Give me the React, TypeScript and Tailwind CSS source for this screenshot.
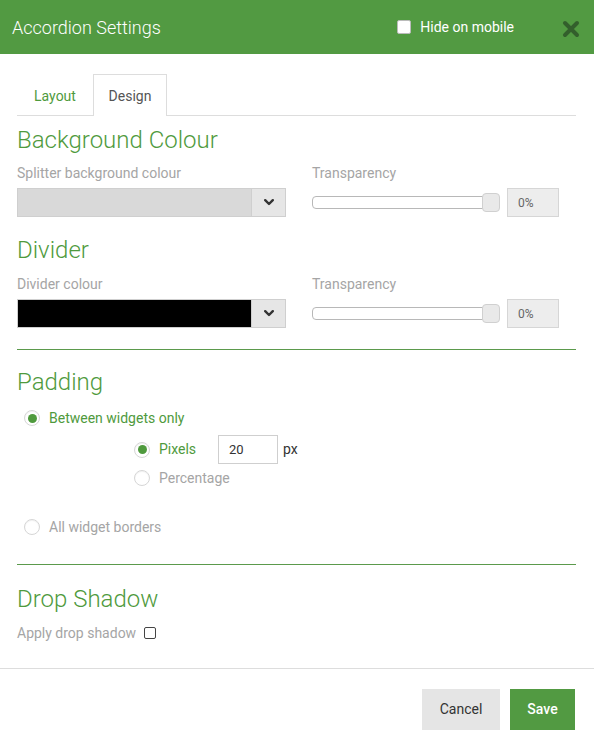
import React from "react";

function Radio({ checked }: { checked?: boolean }) {
  return (
    <span className="inline-flex h-[16px] w-[16px] items-center justify-center rounded-full border border-[#d6d6d6] bg-white shadow-[inset_0_1px_1px_rgba(0,0,0,0.06)]">
      {checked && <span className="h-[9px] w-[9px] rounded-full bg-[#4f9a3d]" />}
    </span>
  );
}

function ColourRow({ swatch }: { swatch: string }) {
  return (
    <div className="mt-[5px] flex items-start">
      <div className="flex h-[29px] w-[269px] border border-[#cfcfcf]">
        <div className="flex-1" style={{ background: swatch }} />
        <div className="flex w-[34px] items-center justify-center border-l border-[#cfcfcf] bg-[#e6e6e6]">
          <svg width="10" height="7" viewBox="0 0 10 7">
            <path d="M1.2 1.2 L5 5 L8.8 1.2" fill="none" stroke="#333" strokeWidth="2.4" strokeLinecap="round" strokeLinejoin="round" />
          </svg>
        </div>
      </div>
      <div className="ml-[26px] flex h-[29px] items-center">
        <div className="relative h-[13px] w-[186px] rounded-[4px] border border-[#b8b8b8] bg-white">
          <div className="absolute right-[-3px] top-[-4px] h-[19px] w-[18px] rounded-[4px] border border-[#d0d0d0] bg-[#e9e9e9]" />
        </div>
      </div>
      <div className="ml-[9px] flex h-[29px] w-[52px] items-center border border-[#d6d6d6] bg-[#ededed] pl-[10px] text-[12px] text-[#666]">
        0%
      </div>
    </div>
  );
}

export default function App() {
  return (
    <div
      className="h-[745px] w-[594px] bg-white"
      style={{ fontFamily: "Roboto, 'Liberation Sans', sans-serif" }}
    >
      <div className="flex h-[54px] items-center bg-[#529a42] pl-[12px] pr-[14px] text-white">
        <div className="text-[18px] font-light">Accordion Settings</div>
        <div className="ml-auto flex items-center">
          <span className="h-[14px] w-[14px] rounded-[2px] border border-[#bbb] bg-white" />
          <span className="ml-[9px] text-[14px]">Hide on mobile</span>
        </div>
        <div className="ml-[48px] mt-[4px]">
          <svg width="18" height="18" viewBox="0 0 18 18">
            <path d="M3 3 L15 15 M15 3 L3 15" stroke="#335f2c" strokeWidth="4" strokeLinecap="round" />
          </svg>
        </div>
      </div>

      <div className="pl-[17px] pr-[18px]">
        <div className="mt-[21px] flex h-[41px] items-end border-b border-[#dddddd]">
          <div className="flex h-[41px] w-[76px] items-center justify-center pt-[3px] text-[14px] text-[#4f9a3d]">
            Layout
          </div>
          <div className="-mb-px flex h-[42px] w-[74px] items-center justify-center border border-b-0 border-[#dddddd] bg-white pt-[2px] text-[14px] text-[#555]">
            Design
          </div>
        </div>

        <div className="mt-[10px] text-[24px] font-light leading-[28px] text-[#4f9a3d]">Background Colour</div>
        <div className="mt-[9px] flex text-[14px] leading-[20px] text-[#a5a5a5]">
          <div className="w-[295px]">Splitter background colour</div>
          <div>Transparency</div>
        </div>
        <ColourRow swatch="#d9d9d9" />

        <div className="mt-[19px] text-[24px] font-light leading-[28px] text-[#4f9a3d]">Divider</div>
        <div className="mt-[10px] flex text-[14px] leading-[20px] text-[#a5a5a5]">
          <div className="w-[295px]">Divider colour</div>
          <div>Transparency</div>
        </div>
        <ColourRow swatch="#000000" />

        <div className="mt-[21px] h-px bg-[#5b9a4c]" />

        <div className="mt-[18px] text-[24px] font-light leading-[28px] text-[#4f9a3d]">Padding</div>
        <div className="ml-[7px] mt-[12px] flex h-[20px] items-center">
          <Radio checked />
          <span className="ml-[9px] text-[14px] text-[#4f9a3d]">Between widgets only</span>
        </div>
        <div className="ml-[117px] mt-[7px] flex h-[29px] items-center">
          <Radio checked />
          <span className="ml-[9px] w-[59px] text-[14px] text-[#4f9a3d]">Pixels</span>
          <div className="flex h-[29px] w-[60px] items-center border border-[#cfcfcf] pl-[10px] text-[13px] text-[#333]">
            20
          </div>
          <span className="ml-[5px] text-[14px] text-[#333]">px</span>
        </div>
        <div className="ml-[117px] mt-[4px] flex h-[20px] items-center">
          <Radio />
          <span className="ml-[9px] text-[14px] text-[#a5a5a5]">Percentage</span>
        </div>
        <div className="ml-[7px] mt-[29px] flex h-[20px] items-center">
          <Radio />
          <span className="ml-[9px] text-[14px] text-[#a5a5a5]">All widget borders</span>
        </div>

        <div className="mt-[27px] h-px bg-[#5b9a4c]" />

        <div className="mt-[20px] text-[24px] font-light leading-[28px] text-[#4f9a3d]">Drop Shadow</div>
        <div className="mt-[10px] flex h-[20px] items-center">
          <span className="text-[14px] text-[#a5a5a5]">Apply drop shadow</span>
          <span className="ml-[8px] h-[12px] w-[12px] rounded-[2px] border border-[#444] bg-white" />
        </div>
      </div>

      <div className="mt-[25px] h-px bg-[#dddddd]" />
      <div className="mt-[20px] flex justify-end pr-[19px]">
        <button className="h-[41px] w-[78px] bg-[#e5e5e5] text-[14px] text-[#333]">Cancel</button>
        <button className="ml-[10px] h-[41px] w-[65px] bg-[#529a42] text-[14px] font-medium text-white">Save</button>
      </div>
    </div>
  );
}
